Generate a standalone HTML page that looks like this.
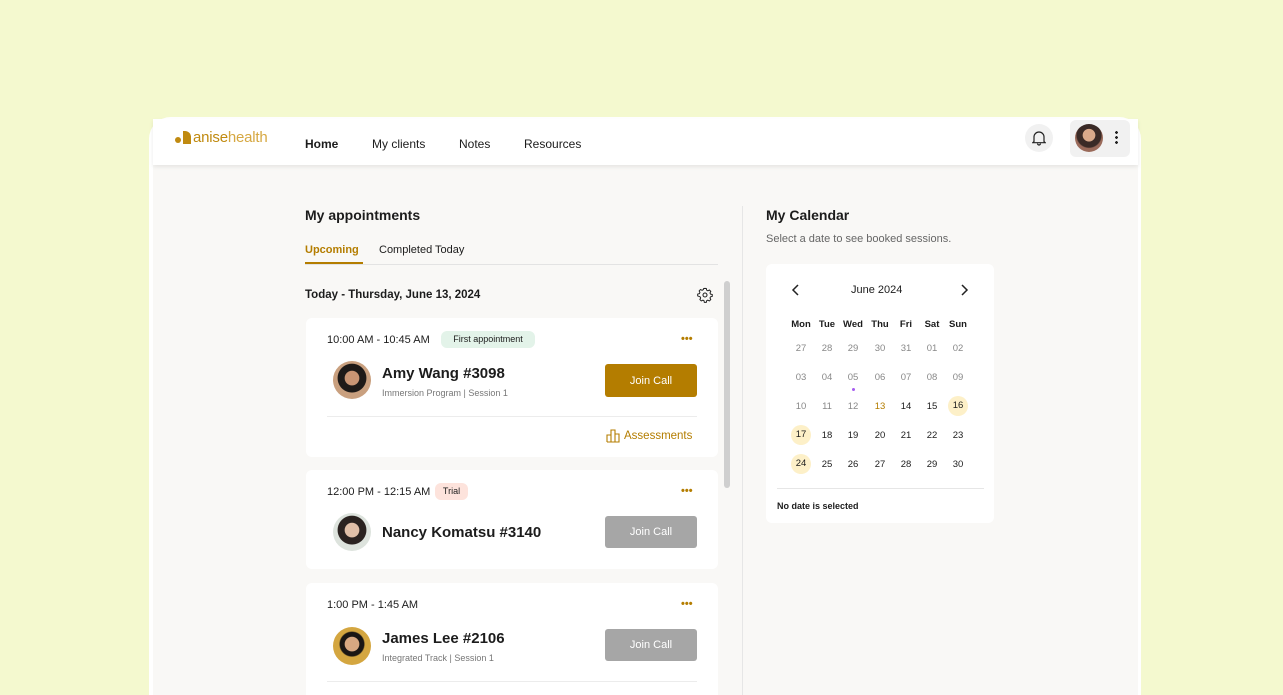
<!DOCTYPE html>
<html><head><meta charset="utf-8"><style>
*{margin:0;padding:0;box-sizing:border-box}
html,body{width:1283px;height:695px;overflow:hidden}
body{background:#f4f9cf;font-family:"Liberation Sans",sans-serif;color:#1c1c1c;position:relative}
.a{position:absolute}
.frame{left:149px;top:117px;width:992px;height:578px;background:#fff;border-radius:22px 22px 0 0;overflow:hidden}
.content{left:153px;top:165px;width:985px;height:530px;background:#f9f8f6}
.hdr{left:153px;top:119px;width:985px;height:46px;background:#fff;box-shadow:0 2px 4px rgba(0,0,0,.08)}
.nav{font-size:12px;top:137px}
.card{background:#fff;border-radius:6px;left:306px;width:412px}
.t12{font-size:11px}
.name{font-size:15px;font-weight:bold}
.sub{font-size:9px;color:#777}
.btn{width:92px;height:33px;border-radius:3px;color:#fff;font-size:11px;display:flex;align-items:center;justify-content:center}
.dots{color:#b47d00;font-size:11px;font-weight:bold;letter-spacing:0}
.av{border-radius:50%;width:38px;height:38px}
.cal div{position:absolute;width:26px;text-align:center;font-size:9.5px}
</style></head><body>
<div class="a frame"></div>
<div class="a content"></div>
<div class="a hdr"></div>
<!-- logo -->
<div class="a" style="left:175px;top:137px;width:6px;height:6px;border-radius:50%;background:#c08a10"></div>
<div class="a" style="left:183px;top:131px;width:8px;height:13px;background:#c08a10;border-radius:0 6px 0 0"></div>
<div class="a" style="left:193px;top:129px;font-size:15px;color:#c08a10;letter-spacing:-.2px">anise<span style="color:#d6a842">health</span></div>
<div class="a nav" style="left:305px;font-weight:bold">Home</div>
<div class="a nav" style="left:372px">My clients</div>
<div class="a nav" style="left:459px">Notes</div>
<div class="a nav" style="left:524px">Resources</div>
<div class="a" style="left:1025px;top:124px;width:28px;height:28px;border-radius:50%;background:#f1f1f1"></div>
<svg class="a" style="left:1032px;top:130px" width="14" height="16" viewBox="0 0 14 16"><path d="M2 11.5V7a5 5 0 0 1 10 0v4.5l1.2 1.2H.8z M5.5 13.5a1.5 1.5 0 0 0 3 0" fill="none" stroke="#222" stroke-width="1.2"/></svg>
<div class="a" style="left:1070px;top:120px;width:60px;height:37px;border-radius:6px;background:#f1f1f1"></div>
<div class="a" style="left:1075px;top:124px;width:28px;height:28px;border-radius:50%;background:radial-gradient(circle at 50% 40%,#d9a98a 0 28%,#3a2a26 30% 55%,#9a6a5a 60%)"></div>
<div class="a" style="left:1115px;top:130px;width:3px;height:14px;background:radial-gradient(circle,#222 1.3px,transparent 1.5px) 0 0/3px 5px"></div>
<!-- left -->
<div class="a" style="left:305px;top:207px;font-size:14px;font-weight:bold">My appointments</div>
<div class="a" style="left:305px;top:244px;font-size:11px;color:#b47d00;font-weight:bold">Upcoming</div>
<div class="a" style="left:379px;top:244px;font-size:11px">Completed Today</div>
<div class="a" style="left:305px;top:264px;width:413px;height:1px;background:#e3e3e3"></div>
<div class="a" style="left:305px;top:262px;width:58px;height:2px;background:#b47d00"></div>
<div class="a" style="left:305px;top:289px;font-size:11.5px;font-weight:bold">Today - Thursday, June 13, 2024</div>
<svg class="a" style="left:697px;top:287px" width="16" height="16" viewBox="0 0 24 24"><circle cx="12" cy="12" r="3" fill="none" stroke="#222" stroke-width="1.6"/><path d="M12 2l2 .3.5 2.5 1.8.9 2.3-1.2 2.1 2.1-1.2 2.3.8 1.8 2.6.6v2.8l-2.6.6-.8 1.8 1.2 2.3-2.1 2.1-2.3-1.2-1.8.8-.5 2.6h-3l-.5-2.6-1.8-.8-2.300 1.2-2.1-2.1 1.2-2.3-.8-1.8L1 13.4v-2.8l2.6-.6.8-1.8-1.2-2.3 2.1-2.1 2.3 1.2 1.8-.9L10 2.3z" fill="none" stroke="#222" stroke-width="1.5" stroke-linejoin="round"/></svg>
<div class="a" style="left:724px;top:281px;width:6px;height:207px;border-radius:3px;background:#cfcfcf"></div>
<div class="a" style="left:742px;top:206px;width:1px;height:490px;background:#e6e6e6"></div>
<!-- card1 -->
<div class="a card" style="top:318px;height:139px"></div>
<div class="a t12" style="left:327px;top:334px">10:00 AM - 10:45 AM</div>
<div class="a" style="left:441px;top:331px;width:94px;height:17px;border-radius:6px;background:#e3f3e9;font-size:9px;line-height:17px;text-align:center">First appointment</div>
<div class="a dots" style="left:681px;top:333px">•••</div>
<div class="a av" style="left:333px;top:361px;background:radial-gradient(circle at 50% 45%,#c99574 0 25%,#1e1a18 27% 50%,#c9a07f 52%)"></div>
<div class="a name" style="left:382px;top:365px">Amy Wang #3098</div>
<div class="a sub" style="left:382px;top:388px">Immersion Program | Session 1</div>
<div class="a btn" style="left:605px;top:364px;background:#b47d00">Join Call</div>
<div class="a" style="left:327px;top:416px;width:370px;height:1px;background:#ececec"></div>
<svg class="a" style="left:606px;top:429px" width="14" height="14" viewBox="0 0 14 14"><path d="M1 13V6h4v7M5 13V1h4v12M9 13V5h4v8H1" fill="none" stroke="#b47d00" stroke-width="1.1"/></svg>
<div class="a" style="left:624px;top:430px;font-size:11.5px;color:#b47d00">Assessments</div>
<!-- card2 -->
<div class="a card" style="top:470px;height:99px"></div>
<div class="a t12" style="left:327px;top:486px">12:00 PM - 12:15 AM</div>
<div class="a" style="left:435px;top:483px;width:33px;height:17px;border-radius:6px;background:#fde3dc;font-size:9px;line-height:17px;text-align:center">Trial</div>
<div class="a dots" style="left:681px;top:485px">•••</div>
<div class="a av" style="left:333px;top:513px;background:radial-gradient(circle at 50% 45%,#e0bfa8 0 25%,#2a2220 27% 50%,#dde3dd 52%)"></div>
<div class="a name" style="left:382px;top:524px">Nancy Komatsu #3140</div>
<div class="a btn" style="left:605px;top:516px;height:32px;background:#a6a6a6">Join Call</div>
<!-- card3 -->
<div class="a card" style="top:583px;height:130px"></div>
<div class="a t12" style="left:327px;top:599px">1:00 PM - 1:45 AM</div>
<div class="a dots" style="left:681px;top:598px">•••</div>
<div class="a av" style="left:333px;top:627px;background:radial-gradient(circle at 50% 45%,#d8a882 0 25%,#1a1614 27% 42%,#d4a640 46%)"></div>
<div class="a name" style="left:382px;top:630px">James Lee #2106</div>
<div class="a sub" style="left:382px;top:653px">Integrated Track | Session 1</div>
<div class="a btn" style="left:605px;top:629px;height:32px;background:#a6a6a6">Join Call</div>
<div class="a" style="left:327px;top:681px;width:370px;height:1px;background:#ececec"></div>
<!-- right -->
<div class="a" style="left:766px;top:207px;font-size:14px;font-weight:bold">My Calendar</div>
<div class="a" style="left:766px;top:233px;font-size:11px;color:#666">Select a date to see booked sessions.</div>
<div class="a" style="left:766px;top:264px;width:228px;height:259px;background:#fff;border-radius:6px"></div>
<svg class="a" style="left:791px;top:284px" width="10" height="12" viewBox="0 0 10 12"><path d="M7 1L2 6l5 5" fill="none" stroke="#222" stroke-width="1.5"/></svg>
<svg class="a" style="left:959px;top:284px" width="10" height="12" viewBox="0 0 10 12"><path d="M3 1l5 5-5 5" fill="none" stroke="#222" stroke-width="1.5"/></svg>
<div class="a" style="left:851px;top:284px;font-size:11px">June 2024</div>
<div class="a cal" style="left:0;top:0">
<div style="left:788px;top:319px;font-weight:bold">Mon</div><div style="left:814px;top:319px;font-weight:bold">Tue</div><div style="left:840px;top:319px;font-weight:bold">Wed</div><div style="left:867px;top:319px;font-weight:bold">Thu</div><div style="left:893px;top:319px;font-weight:bold">Fri</div><div style="left:919px;top:319px;font-weight:bold">Sat</div><div style="left:945px;top:319px;font-weight:bold">Sun</div>
</div>
<div class="a" style="left:852px;top:388px;width:3px;height:3px;border-radius:50%;background:#a55cf0"></div>
<div class="a" style="left:777px;top:488px;width:207px;height:1px;background:#e6e6e6"></div>
<div class="a" style="left:777px;top:501px;font-size:9px;font-weight:bold">No date is selected</div>
<div class="a cal" style="left:0;top:0">
<div style="left:788px;top:343px;color:#888">27</div><div style="left:814px;top:343px;color:#888">28</div><div style="left:840px;top:343px;color:#888">29</div><div style="left:867px;top:343px;color:#888">30</div><div style="left:893px;top:343px;color:#888">31</div><div style="left:919px;top:343px;color:#888">01</div><div style="left:945px;top:343px;color:#888">02</div>
<div style="left:788px;top:372px;color:#888">03</div><div style="left:814px;top:372px;color:#888">04</div><div style="left:840px;top:372px;color:#888">05</div><div style="left:867px;top:372px;color:#888">06</div><div style="left:893px;top:372px;color:#888">07</div><div style="left:919px;top:372px;color:#888">08</div><div style="left:945px;top:372px;color:#888">09</div>
<div style="left:788px;top:401px;color:#888">10</div><div style="left:814px;top:401px;color:#888">11</div><div style="left:840px;top:401px;color:#888">12</div><div style="left:867px;top:401px;color:#b47d00">13</div><div style="left:893px;top:401px">14</div><div style="left:919px;top:401px">15</div><div style="left:948px;top:396px;width:20px;height:20px;line-height:20px;border-radius:50%;background:#fdf0c8">16</div>
<div style="left:791px;top:425px;width:20px;height:20px;line-height:20px;border-radius:50%;background:#fdf0c8">17</div><div style="left:814px;top:430px">18</div><div style="left:840px;top:430px">19</div><div style="left:867px;top:430px">20</div><div style="left:893px;top:430px">21</div><div style="left:919px;top:430px">22</div><div style="left:945px;top:430px">23</div>
<div style="left:791px;top:454px;width:20px;height:20px;line-height:20px;border-radius:50%;background:#fdf0c8">24</div><div style="left:814px;top:459px">25</div><div style="left:840px;top:459px">26</div><div style="left:867px;top:459px">27</div><div style="left:893px;top:459px">28</div><div style="left:919px;top:459px">29</div><div style="left:945px;top:459px">30</div>
</div>
</body></html>
